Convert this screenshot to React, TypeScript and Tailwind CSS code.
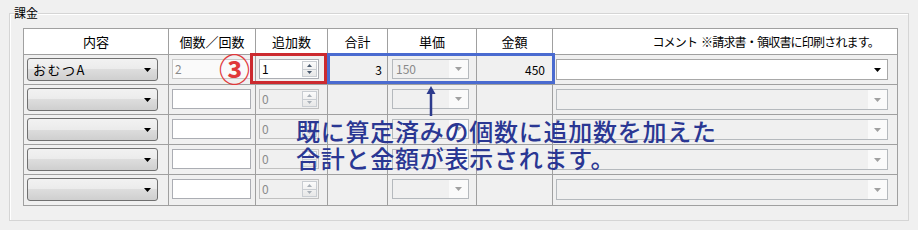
import React from "react";

interface Row {
  item: string;
  count: string;
  add: string;
  total: string;
  price: string;
  amount: string;
  active: boolean;
}

const rows: Row[] = [
  { item: "おむつA", count: "2", add: "1", total: "3", price: "150", amount: "450", active: true },
  { item: "", count: "", add: "0", total: "", price: "", amount: "", active: false },
  { item: "", count: "", add: "0", total: "", price: "", amount: "", active: false },
  { item: "", count: "", add: "0", total: "", price: "", amount: "", active: false },
  { item: "", count: "", add: "0", total: "", price: "", amount: "", active: false },
];

const DownArrow = ({ color }: { color: string }) => (
  <svg width="7" height="4" viewBox="0 0 7 4">
    <path d="M0 0h7L3.5 4z" fill={color} />
  </svg>
);

const Spinner = ({ active }: { active: boolean }) => (
  <div className="ml-auto mr-[1px] flex h-[16px] w-[15px] flex-col border border-[#c9cdd2] bg-[linear-gradient(#fbfbfb,#e8e8e8)]">
    <div className="flex flex-1 items-center justify-center border-b border-[#c9cdd2]">
      <svg width="5" height="3" viewBox="0 0 5 3">
        <path d="M0 3h5L2.5 0z" fill={active ? "#4a5a6e" : "#a9b0b8"} />
      </svg>
    </div>
    <div className="flex flex-1 items-center justify-center">
      <svg width="5" height="3" viewBox="0 0 5 3">
        <path d="M0 0h5L2.5 3z" fill={active ? "#4a5a6e" : "#a9b0b8"} />
      </svg>
    </div>
  </div>
);

const cell = "border-r border-b border-[#a0a0a0]";

export default function App() {
  return (
    <div className="relative h-[230px] w-[918px] overflow-hidden bg-[#f0f0f0] font-['Noto_Sans_CJK_JP',sans-serif] text-black">
      <fieldset className="ml-[9px] mt-[5px] w-[900px] border border-[#d5d5d5] pb-[14px] shadow-[inset_1px_1px_0_#ffffff]">
        <legend className="ml-[4px] text-[12px] leading-[16px]">課金</legend>
        <div className="ml-[13px] mt-[7px] grid w-[875px] grid-cols-[145px_87px_72px_60px_89px_76px_345px] border-l border-t border-[#a0a0a0] text-[12px]">
          {["内容", "個数／回数", "追加数", "合計", "単価", "金額"].map((h) => (
            <div key={h} className={`${cell} flex h-[26px] items-center justify-center bg-white text-[13px]`}>
              {h}
            </div>
          ))}
          <div className={`${cell} flex h-[26px] items-center justify-end bg-white pr-[18px] text-[12px] tracking-[-0.8px]`}>
            コメント&nbsp;&nbsp;※請求書・領収書に印刷されます。
          </div>

          {rows.map((r, i) => {
            const h = i === rows.length - 1 ? "h-[31px]" : "h-[30px]";
            return (
              <React.Fragment key={i}>
                <div className={`${cell} ${h} pl-[3px] pt-[3px]`}>
                  <div className="flex h-[23px] w-[131px] items-center rounded-[3px] border border-[#707070] bg-[linear-gradient(#f2f2f2,#ebebeb_50%,#dddddd_50%,#cfcfcf)] pl-[5px] pr-[6px]">
                    <span className="text-[13px] tracking-[1.5px]">{r.item}</span>
                    <span className="ml-auto">
                      <DownArrow color="#000" />
                    </span>
                  </div>
                </div>
                <div className={`${cell} ${h} pl-[3px] pt-[4px]`}>
                  <div
                    className={`flex h-[20px] w-[79px] items-center border pl-[2px] ${
                      r.active ? "border-[#c8c8c8] bg-[#fafafa] text-[#8a8a8a]" : "border-[#abadb3] bg-white"
                    }`}
                  >
                    {r.count}
                  </div>
                </div>
                <div className={`${cell} ${h} pl-[3px] pt-[4px]`}>
                  <div
                    className={`flex h-[20px] w-[60px] items-center border pl-[2px] ${
                      r.active ? "border-[#abadb3] bg-white text-black" : "border-[#c0c0c0] bg-[#f0f0f0] text-[#8a8a8a]"
                    }`}
                  >
                    <span>{r.add}</span>
                    <Spinner active={r.active} />
                  </div>
                </div>
                <div className={`${cell} ${h} flex items-center justify-end pr-[5px]`}>{r.total}</div>
                <div className={`${cell} ${h} pl-[4px] pt-[4px]`}>
                  <div className="flex h-[20px] w-[77px] items-center border border-[#b5b9bd] bg-[#f0f0f0]">
                    <span className="pl-[3px] text-[#8a8a8a]">{r.price}</span>
                    <div className="ml-auto flex h-full w-[19px] items-center justify-center bg-[#fafafa]">
                      <DownArrow color="#a0a0a0" />
                    </div>
                  </div>
                </div>
                <div className={`${cell} ${h} flex items-center justify-end pr-[7px]`}>{r.amount}</div>
                <div className={`${cell} ${h} pl-[3px] pt-[4px]`}>
                  <div
                    className={`flex h-[21px] w-[332px] items-center border ${
                      r.active ? "border-[#a8a8a8] bg-white" : "border-[#b5b9bd] bg-[#f0f0f0]"
                    }`}
                  >
                    <div className={`ml-auto flex h-full w-[19px] items-center justify-center ${r.active ? "" : "bg-[#fafafa]"}`}>
                      <DownArrow color={r.active ? "#000" : "#a0a0a0"} />
                    </div>
                  </div>
                </div>
              </React.Fragment>
            );
          })}
        </div>
      </fieldset>

      {/* annotations */}
      <div className="absolute left-[250px] top-[53px] h-[31px] w-[77px] border-[3px] border-[#cc2a2f]" />
      <div className="absolute left-[219px] top-[56px] text-[31px] font-bold leading-[24px] text-[#e0383a]">③</div>
      <div className="absolute left-[327px] top-[53px] h-[31px] w-[228px] border-[3px] border-[#4a6bd0]" />
      <svg className="absolute left-[425px] top-[86px]" width="12" height="30" viewBox="0 0 12 30">
        <path d="M6 4V30" stroke="#2d3b8d" strokeWidth="2.5" />
        <path d="M6 0L1.5 8h9z" fill="#2d3b8d" />
      </svg>
      <div className="absolute left-[296px] top-[117px] text-[24px] font-medium leading-[27px] tracking-[0.75px] text-[#2a3793]">
        <div>既に算定済みの個数に追加数を加えた</div>
        <div>合計と金額が表示されます。</div>
      </div>
    </div>
  );
}
